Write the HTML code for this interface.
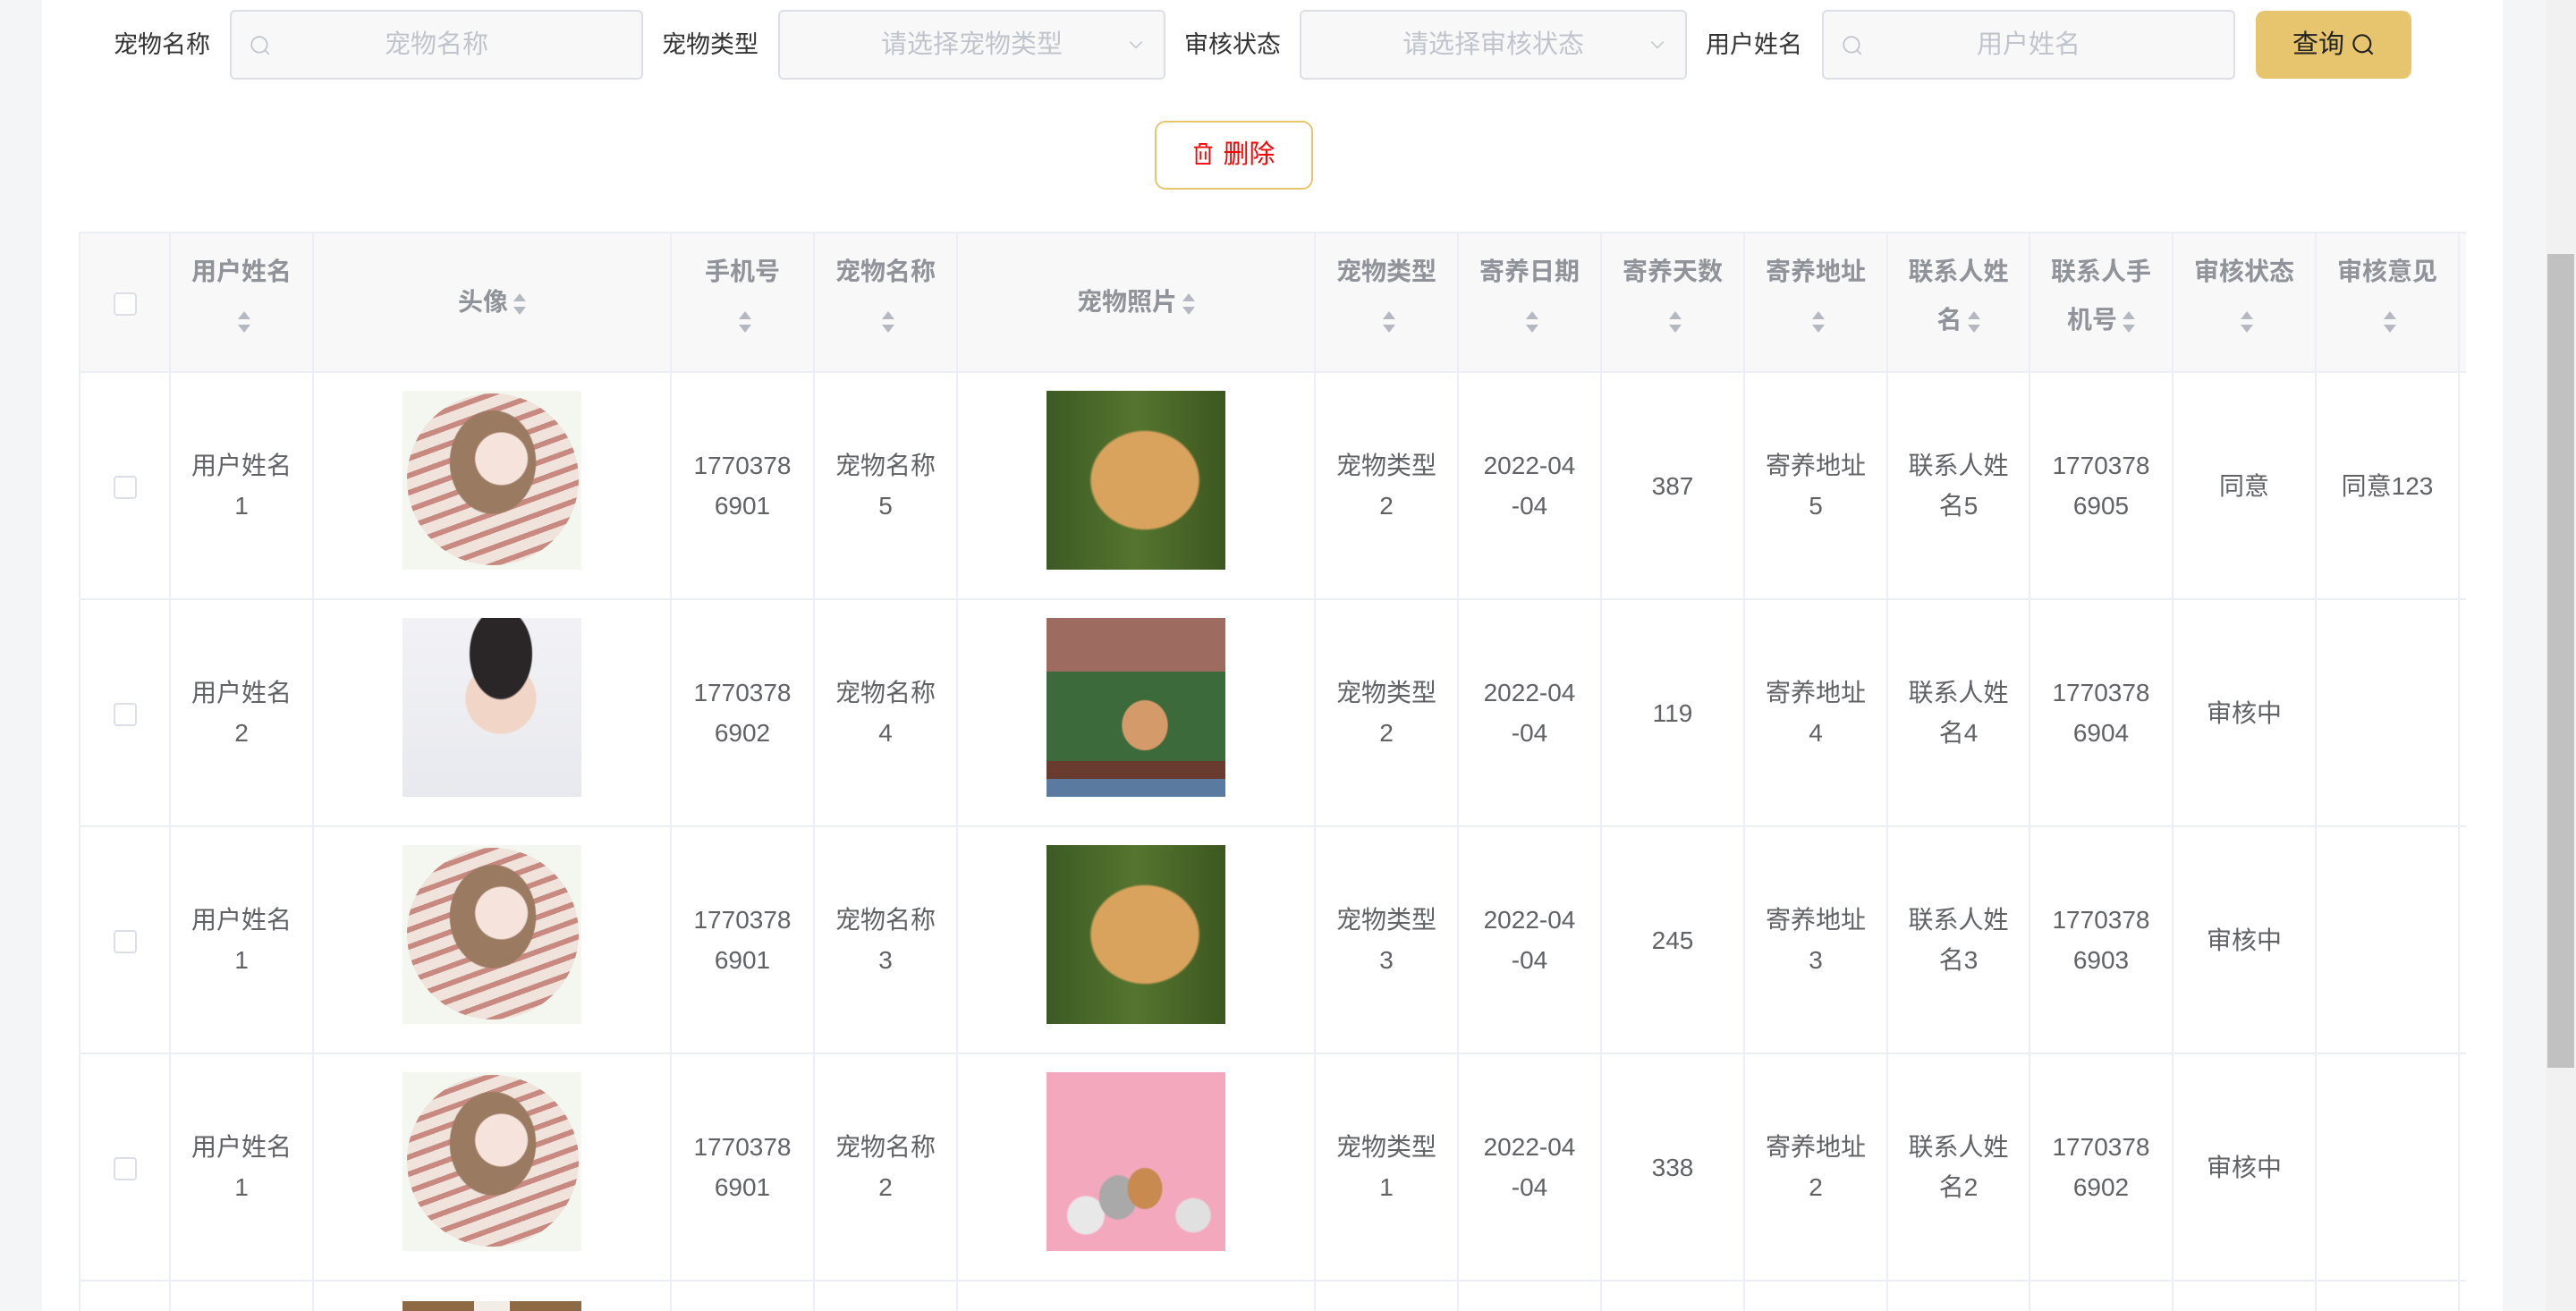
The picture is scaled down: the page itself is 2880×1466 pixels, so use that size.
<!DOCTYPE html>
<html style="height:1466px;overflow:hidden"><head><meta charset="utf-8">
<style>
*{box-sizing:border-box;margin:0;padding:0}
body{width:2880px;height:1466px;overflow:hidden;background:#fff;font-family:"Liberation Sans","Noto Sans CJK SC",sans-serif;position:relative}
.lg{position:absolute;left:0;top:0;width:47px;height:1466px;background:#f4f5f7}
.rg{position:absolute;left:2798px;top:0;width:48px;height:1466px;background:#f4f5f7}
.sb{position:absolute;left:2846px;top:0;width:34px;height:1466px;background:#f1f1f1}
.th{position:absolute;left:2848px;top:284px;width:30px;height:910px;background:#c1c1c1}
.lab{position:absolute;top:30px;font-size:27px;color:#333;line-height:40px}
.inp{position:absolute;top:11px;height:78px;border:2px solid #dcdfe6;border-radius:6px;background:#f8f8f9;color:#c0c4cc;font-size:29px;text-align:center;line-height:74px}
.ico{position:absolute;left:20px;top:26px;width:24px;height:24px}
.arr{position:absolute;right:22px;top:28px;width:18px;height:18px}
.btn{position:absolute;left:2522px;top:12px;width:174px;height:76px;background:#e6c56e;border-radius:10px;font-size:29px;color:#222;text-align:center;line-height:76px}
.del{position:absolute;left:1291px;top:135px;width:177px;height:77px;border:2px solid #e6c56e;border-radius:12px;color:#f00;font-size:29px;line-height:73px;text-align:center}
.wrap{position:absolute;left:88px;top:259px;width:2669px;height:1207px;overflow:hidden}
table{border-collapse:collapse;table-layout:fixed;width:2669px}
td,th{border:2px solid #ebeef5;text-align:center;vertical-align:middle;color:#606266;font-size:28px;line-height:45px;font-weight:normal;padding:0 8px}
th{background:#f8f8f9;color:#909399;font-weight:bold;height:156px;line-height:54px;vertical-align:top;padding-top:16px}
th.c{vertical-align:middle;padding-top:0}
tr.r td{height:254px}
td.p{vertical-align:top;padding-top:20px}
tr.last td{height:35px;padding:0;border-bottom:0}
.clip{height:33px;overflow:hidden;padding-top:21px}
.cb{display:inline-block;width:26px;height:26px;border:2px solid #dcdfe6;border-radius:4px;background:#fff;vertical-align:middle}
.s{display:inline-block;width:14px;height:24px;vertical-align:middle;position:relative;margin-left:6px}
.s:before{content:"";position:absolute;left:0;top:0;border:7px solid transparent;border-bottom:9px solid #b4b8c0;border-top:0}
.s:after{content:"";position:absolute;left:0;bottom:0;border:7px solid transparent;border-top:9px solid #b4b8c0;border-bottom:0}
.im{display:block;width:200px;height:200px;margin:0 auto;position:relative;overflow:hidden}
.girl{background:#f3f7ef}
.girl:before{content:"";position:absolute;left:5px;top:3px;width:192px;height:192px;border-radius:50%;background:radial-gradient(circle at 55% 38%,#f6e4dc 0 18%,transparent 19%),radial-gradient(ellipse at 50% 40%,#9b7a62 0 35%,transparent 36%),repeating-linear-gradient(160deg,#efe3dc 0 12px,#c88a80 12px 18px);}
.boy{background:radial-gradient(ellipse at 55% 20%,#2a2628 0 22%,transparent 23%),radial-gradient(ellipse at 55% 45%,#f1d6c8 0 25%,transparent 26%),linear-gradient(#f2f2f6,#e8e9ee)}
.dog1{background:radial-gradient(ellipse at 55% 50%,#d9a35e 0 38%,transparent 40%),linear-gradient(90deg,#3c5a24,#55752f 50%,#3d5720)}
.dog2{background:radial-gradient(ellipse at 55% 60%,#d59a6a 0 16%,transparent 17%),linear-gradient(#9d6b60 0 30%,#3d6a3a 30% 80%,#6a3b2f 80% 90%,#5b7aa0 90%)}
.pets{background:radial-gradient(ellipse at 55% 65%,#c98a4f 0 12%,transparent 13%),radial-gradient(ellipse at 40% 70%,#a9a9aa 0 12%,transparent 13%),radial-gradient(ellipse at 22% 80%,#e8e8e8 0 9%,transparent 10%),radial-gradient(ellipse at 82% 80%,#e0e0e0 0 8%,transparent 9%),#f4a8be}
.dog3{background:linear-gradient(90deg,#8e6a44 0 40%,#f2ede6 40% 60%,#8e6a44 60%)}
.white{background:#fff}
</style></head><body>
<div class="lg"></div><div class="rg"></div><div class="sb"></div><div class="th"></div>

<div class="lab" style="left:127px">宠物名称</div>
<div class="inp" style="left:257px;width:462px"><svg class="ico" viewBox="0 0 22 22"><circle cx="10" cy="10" r="8" fill="none" stroke="#c0c4cc" stroke-width="1.6"/><path d="M16 16l4 4" stroke="#c0c4cc" stroke-width="1.6"/></svg>宠物名称</div>
<div class="lab" style="left:740px">宠物类型</div>
<div class="inp" style="left:870px;width:433px">请选择宠物类型<svg class="arr" viewBox="0 0 16 16"><path d="M2 5l6 6 6-6" fill="none" stroke="#c0c4cc" stroke-width="1.4"/></svg></div>
<div class="lab" style="left:1324px">审核状态</div>
<div class="inp" style="left:1453px;width:433px">请选择审核状态<svg class="arr" viewBox="0 0 16 16"><path d="M2 5l6 6 6-6" fill="none" stroke="#c0c4cc" stroke-width="1.4"/></svg></div>
<div class="lab" style="left:1907px">用户姓名</div>
<div class="inp" style="left:2037px;width:462px"><svg class="ico" viewBox="0 0 22 22"><circle cx="10" cy="10" r="8" fill="none" stroke="#c0c4cc" stroke-width="1.6"/><path d="M16 16l4 4" stroke="#c0c4cc" stroke-width="1.6"/></svg>用户姓名</div>
<div class="btn">查询 <svg width="26" height="26" viewBox="0 0 22 22" style="vertical-align:-4px"><circle cx="10" cy="10" r="8" fill="none" stroke="#222" stroke-width="1.8"/><path d="M15 15l5 5" stroke="#222" stroke-width="1.8"/></svg></div>
<div class="del"><svg width="24" height="28" viewBox="0 0 26 28" style="vertical-align:-4px;margin-right:10px"><path d="M2 6h22M9 6V2h8v4M5 6v20h16V6M10 11v10M16 11v10" fill="none" stroke="#f00" stroke-width="2"/></svg>删除</div>

<div class="wrap">
<table>
<colgroup><col style="width:101px"><col style="width:160px"><col style="width:400px"><col style="width:160px"><col style="width:160px"><col style="width:400px"><col style="width:160px"><col style="width:160px"><col style="width:160px"><col style="width:160px"><col style="width:159px"><col style="width:160px"><col style="width:160px"><col style="width:160px"><col style="width:9px"></colgroup>
<tr>
<th class="c"><span class="cb"></span></th>
<th>用户姓名<br><span class="s"></span></th>
<th class="c">头像<span class="s"></span></th>
<th>手机号<br><span class="s"></span></th>
<th>宠物名称<br><span class="s"></span></th>
<th class="c">宠物照片<span class="s"></span></th>
<th>宠物类型<br><span class="s"></span></th>
<th>寄养日期<br><span class="s"></span></th>
<th>寄养天数<br><span class="s"></span></th>
<th>寄养地址<br><span class="s"></span></th>
<th>联系人姓<br>名<span class="s"></span></th>
<th>联系人手<br>机号<span class="s"></span></th>
<th>审核状态<br><span class="s"></span></th>
<th>审核意见<br><span class="s"></span></th>
<th></th>
</tr>
<tr class="r"><td><span class="cb"></span></td><td>用户姓名<br>1</td><td class="p"><div class="im girl"></div></td><td>1770378<br>6901</td><td>宠物名称<br>5</td><td class="p"><div class="im dog1"></div></td><td>宠物类型<br>2</td><td>2022-04<br>-04</td><td>387</td><td>寄养地址<br>5</td><td>联系人姓<br>名5</td><td>1770378<br>6905</td><td>同意</td><td>同意123</td><td></td></tr>
<tr class="r"><td><span class="cb"></span></td><td>用户姓名<br>2</td><td class="p"><div class="im boy"></div></td><td>1770378<br>6902</td><td>宠物名称<br>4</td><td class="p"><div class="im dog2"></div></td><td>宠物类型<br>2</td><td>2022-04<br>-04</td><td>119</td><td>寄养地址<br>4</td><td>联系人姓<br>名4</td><td>1770378<br>6904</td><td>审核中</td><td></td><td></td></tr>
<tr class="r"><td><span class="cb"></span></td><td>用户姓名<br>1</td><td class="p"><div class="im girl"></div></td><td>1770378<br>6901</td><td>宠物名称<br>3</td><td class="p"><div class="im dog1"></div></td><td>宠物类型<br>3</td><td>2022-04<br>-04</td><td>245</td><td>寄养地址<br>3</td><td>联系人姓<br>名3</td><td>1770378<br>6903</td><td>审核中</td><td></td><td></td></tr>
<tr class="r"><td><span class="cb"></span></td><td>用户姓名<br>1</td><td class="p"><div class="im girl"></div></td><td>1770378<br>6901</td><td>宠物名称<br>2</td><td class="p"><div class="im pets"></div></td><td>宠物类型<br>1</td><td>2022-04<br>-04</td><td>338</td><td>寄养地址<br>2</td><td>联系人姓<br>名2</td><td>1770378<br>6902</td><td>审核中</td><td></td><td></td></tr>
<tr class="last"><td></td><td></td><td><div class="clip"><div class="im dog3"></div></div></td><td></td><td></td><td><div class="clip"><div class="im white"></div></div></td><td></td><td></td><td></td><td></td><td></td><td></td><td></td><td></td><td></td></tr>
</table>
</div>
</body></html>
